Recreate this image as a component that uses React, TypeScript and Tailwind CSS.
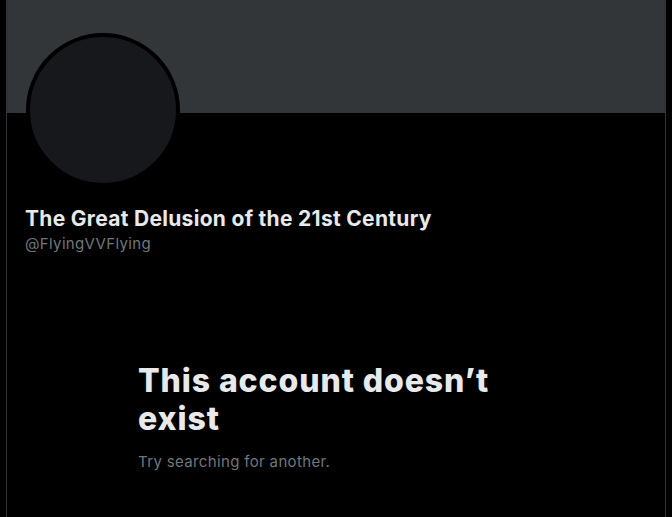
export default function App() {
  return (
    <div className="min-h-screen bg-black" style={{ fontFamily: 'Inter, "Noto Sans", sans-serif' }}>
      <div className="mx-auto w-[660px] min-h-[517px] border-x border-[#2f3336]">
        {/* banner */}
        <div className="h-[113px] bg-[#333639]" />

        {/* avatar + names */}
        <div className="px-[18px]">
          <div className="-mt-[80px] ml-[1px] h-[154px] w-[154px] rounded-full border-4 border-black bg-[#16181c]" />
          <div className="mt-[20px]">
            <h2 className="text-[21px] font-bold leading-[24px] tracking-[0.3px] text-[#e7e9ea]">
              The Great Delusion of the 21st Century
            </h2>
            <div className="mt-[3px] text-[15px] leading-[20px] tracking-[0.35px] text-[#71767b]">@FlyingVVFlying</div>
          </div>
        </div>

        {/* empty state */}
        <div className="mx-auto mt-[108px] w-[396px]">
          <h1 className="text-[32px] font-extrabold leading-[38px] tracking-[0.9px] text-[#e7e9ea]">
            This account doesn’t exist
          </h1>
          <p className="mt-[14px] text-[15px] leading-[20px] tracking-[0.35px] text-[#71767b]">Try searching for another.</p>
        </div>
      </div>
    </div>
  );
}
